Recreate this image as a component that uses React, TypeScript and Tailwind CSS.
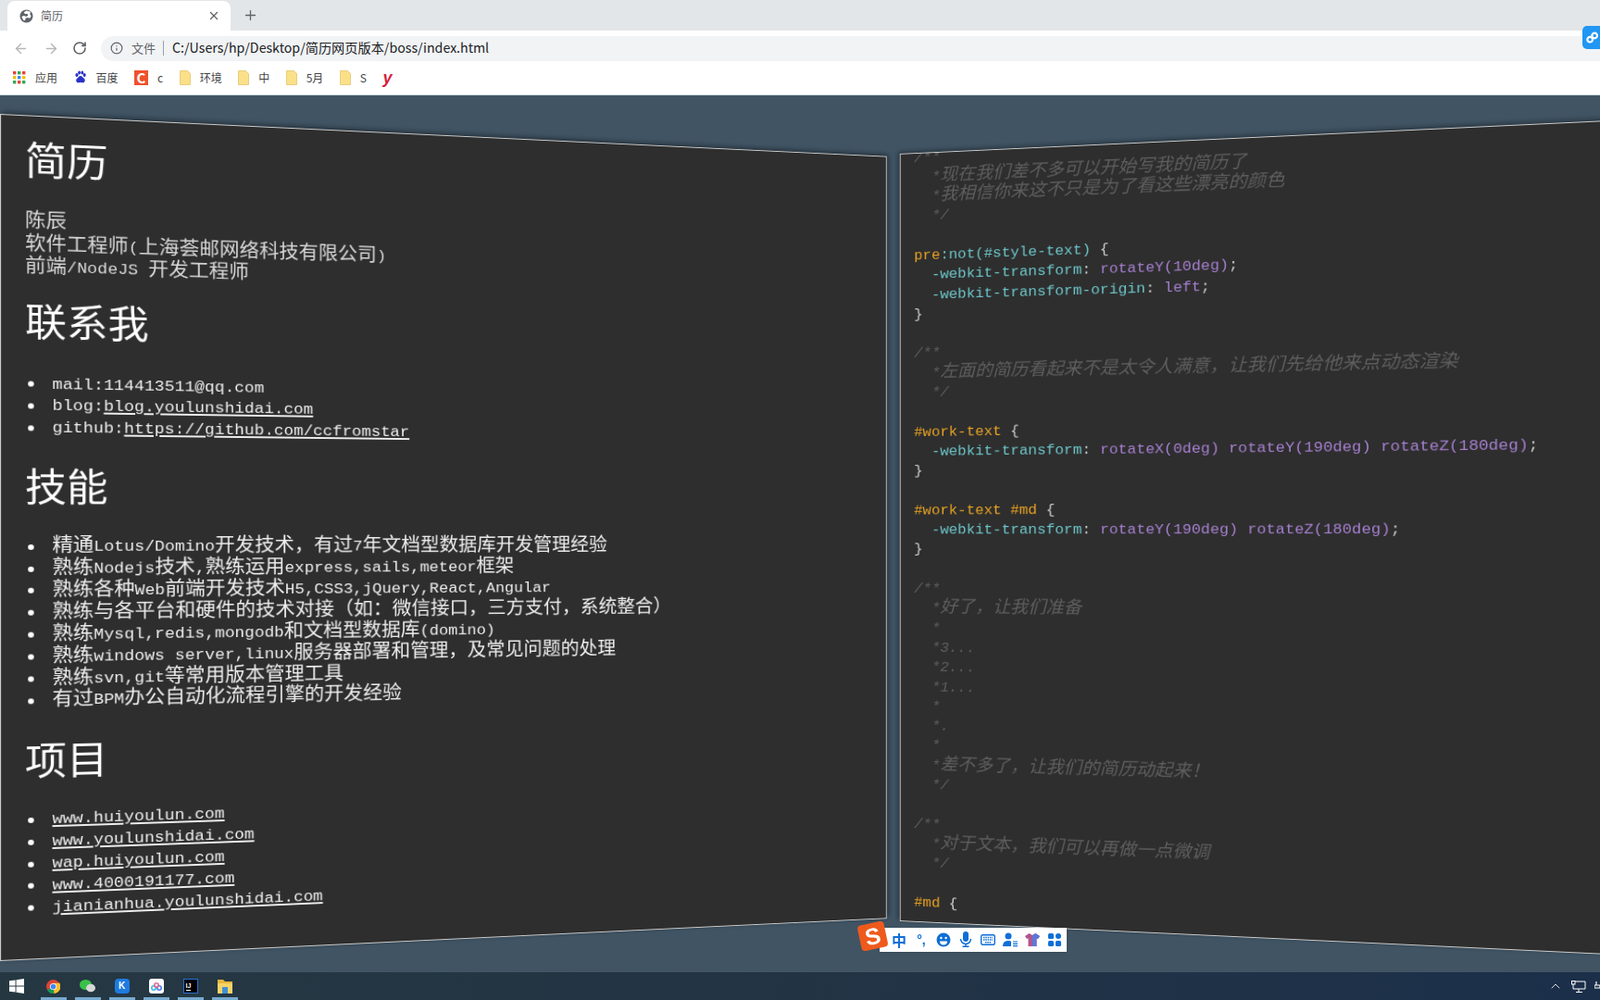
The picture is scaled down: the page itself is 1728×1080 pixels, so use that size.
import { ArrowLeft, ArrowRight, Info, Plus, RotateCw, X, ChevronUp } from "lucide-react";
import type { ReactNode } from "react";

const MONO = `"Liberation Mono", "Noto Sans CJK SC", monospace`;

// latin runs sit at a smaller size so they take half of a CJK cell, like NSimSun
function Mix({ text, latin = "text-[17.4px]" }: { text: string; latin?: string }) {
  const parts = text.split(/([\x20-\x7e]+)/).filter(Boolean);
  return (
    <>
      {parts.map((p, i) =>
        /^[\x20-\x7e]/.test(p) ? (
          <span key={i} className={latin}>
            {p}
          </span>
        ) : (
          <span key={i}>{p}</span>
        ),
      )}
    </>
  );
}

function Folder() {
  return (
    <svg width="12" height="16" viewBox="0 0 12 16" className="shrink-0">
      <path d="M.5 .5h8l3 3v12H.5z" fill="#fbe08a" stroke="#e2c56a" strokeWidth="0.8" />
    </svg>
  );
}

function Bookmark({ icon, label }: { icon: ReactNode; label?: string }) {
  return (
    <div className="flex items-center gap-[10px]">
      {icon}
      {label && <span className="text-[12px] text-[#444]">{label}</span>}
    </div>
  );
}

function BrowserChrome() {
  return (
    <div className="relative shrink-0 font-['Noto_Sans_CJK_SC','Noto_Sans',sans-serif]">
      {/* tab strip */}
      <div className="flex h-[33px] items-end bg-[#e3e6e9] pl-[8px]">
        <div className="flex h-[32px] w-[241px] items-center rounded-t-[8px] bg-white pl-[13px] pr-[11px]">
          <svg width="15" height="15" viewBox="0 0 16 16" className="shrink-0">
            <circle cx="8" cy="8" r="7.5" fill="#5f6368" />
            <path d="M8 1.500 5 3.500l1.500 2L9 5l1 2-2 1.500-3-1-2.500 1 2 4 2 .5.5-2.500 2.500-1 2.500 1 1.500-2.500-1.500-3L13 3z" fill="#fff" />
          </svg>
          <span className="ml-[8px] flex-1 text-[12px] text-[#5f6368]">简历</span>
          <X size={14} strokeWidth={2.2} className="text-[#5f6368]" />
        </div>
        <Plus size={17} strokeWidth={1.8} className="mb-[8px] ml-[13px] text-[#5f6368]" />
      </div>
      {/* address bar */}
      <div className="flex h-[35px] items-center bg-white pl-[14px] pt-[3px]">
        <ArrowLeft size={17} strokeWidth={2} className="text-[#b4b7ba]" />
        <ArrowRight size={17} strokeWidth={2} className="ml-[16px] text-[#b4b7ba]" />
        <RotateCw size={16} strokeWidth={2.4} className="ml-[14px] text-[#5f6368]" />
        <div className="ml-[15px] flex h-[27px] flex-1 items-center rounded-l-full bg-[#f1f3f4] pl-[10px]">
          <Info size={14} strokeWidth={2} className="text-[#5f6368]" />
          <span className="ml-[9px] text-[13px] text-[#5f6368]">文件</span>
          <span className="ml-[8px] h-[16px] w-px bg-[#9aa0a6]" />
          <span className="ml-[9px] text-[14.2px] text-[#202124]">C:/Users/hp/Desktop/简历网页版本/boss/index.html</span>
        </div>
      </div>
      {/* bookmarks */}
      <div className="flex h-[35px] items-center gap-[17.5px] border-b border-[#cfd8dc] bg-white pb-[3px] pl-[14px]">
        <Bookmark
          label="应用"
          icon={
            <svg width="14" height="14" viewBox="0 0 14 14">
              {[0, 5, 10].map((y, r) =>
                [0, 5, 10].map((x, c) => (
                  <rect key={`${r}${c}`} x={x} y={y} width="3.4" height="3.4" fill={["#ea4335", "#fbbc05", "#34a853", "#4285f4"][(r + c * 2) % 4]} />
                )),
              )}
            </svg>
          }
        />
        <Bookmark
          label="百度"
          icon={
            <svg width="14" height="15" viewBox="0 0 14 15" fill="#2932c8">
              <ellipse cx="3" cy="5" rx="1.6" ry="2" />
              <ellipse cx="5.6" cy="2.4" rx="1.4" ry="2" />
              <ellipse cx="8.8" cy="2.4" rx="1.4" ry="2" />
              <ellipse cx="11.2" cy="5" rx="1.5" ry="2" />
              <path d="M7 6c2 0 2.4 2 4 3 1.600 1.200.6 4.500-1.600 4.300-1.200 0-1.400-.4-2.400-.4s-1.400.4-2.400.4C2.400 13.500 1.400 10.200 3 9c1.600-1 2-3 4-3z" />
            </svg>
          }
        />
        <Bookmark
          label="c"
          icon={
            <span className="flex h-[16px] w-[15px] items-center justify-center bg-[#f0512c] text-[15px] font-bold leading-none text-white">C</span>
          }
        />
        <Bookmark icon={<Folder />} label="环境" />
        <Bookmark icon={<Folder />} label="中" />
        <Bookmark icon={<Folder />} label="5月" />
        <Bookmark icon={<Folder />} label="S" />
        <span className="font-['Liberation_Sans',sans-serif] text-[18px] font-bold italic leading-none text-[#d81e3a]">y</span>
      </div>
      {/* extension badge */}
      <div className="absolute right-0 top-[28px] flex h-[25px] w-[19px] items-center rounded-l-[5px] bg-[#2196f3] pl-[4px]">
        <svg width="18" height="16" viewBox="0 0 18 16" fill="none" stroke="#fff" strokeWidth="2.6">
          <circle cx="5" cy="10" r="3.4" />
          <circle cx="11" cy="5" r="3.4" />
        </svg>
      </div>
    </div>
  );
}

function Item({ children }: { children: ReactNode }) {
  return (
    <li className="flex h-[23.9px] items-center">
      <span className="ml-[3px] mr-[18.5px] h-[6px] w-[6px] shrink-0 rounded-full bg-white" />
      <span>{children}</span>
    </li>
  );
}

function ResumePanel() {
  const h1 = "m-0 text-[42px] leading-[50px] text-white";
  const ul = "m-0 list-none p-0 text-[#eee] leading-[23.9px]";
  const pLine = "block h-[24.5px]";
  return (
    <div
      className="h-[915px] w-[983px] shrink-0 origin-left rotate-y-[10deg] overflow-hidden border border-[#ccc] bg-[#2e2e2e] pl-[24px] pt-[27px] text-[21px] leading-[24.5px] text-[#d8d8d8] shadow-[2px_-2px_6px_rgba(0,0,0,0.45)]"
      style={{ fontFamily: MONO }}
    >
      <h1 className={h1}>简历</h1>
      <p className="mb-0 mt-[25px]">
        <span className={pLine}><Mix text="陈辰" /></span>
        <span className={pLine}><Mix text="软件工程师(上海荟邮网络科技有限公司)" /></span>
        <span className={pLine}><Mix text="前端/NodeJS 开发工程师" /></span>
      </p>
      <h2 className={`${h1} mt-[26.5px]`}>联系我</h2>
      <ul className={`${ul} mt-[26px]`}>
        <Item><Mix text="mail:114413511@qq.com" /></Item>
        <Item><Mix text="blog:" /><a className="underline"><Mix text="blog.youlunshidai.com" /></a></Item>
        <Item><Mix text="github:" /><a className="underline"><Mix text="https://github.com/ccfromstar" /></a></Item>
      </ul>
      <h2 className={`${h1} mt-[31px]`}>技能</h2>
      <ul className={`${ul} mt-[24px]`}>
        <Item><Mix text="精通Lotus/Domino开发技术，有过7年文档型数据库开发管理经验" /></Item>
        <Item><Mix text="熟练Nodejs技术,熟练运用express,sails,meteor框架" /></Item>
        <Item><Mix text="熟练各种Web前端开发技术H5,CSS3,jQuery,React,Angular" /></Item>
        <Item><Mix text="熟练与各平台和硬件的技术对接（如：微信接口，三方支付，系统整合）" /></Item>
        <Item><Mix text="熟练Mysql,redis,mongodb和文档型数据库(domino)" /></Item>
        <Item><Mix text="熟练windows server,linux服务器部署和管理，及常见问题的处理" /></Item>
        <Item><Mix text="熟练svn,git等常用版本管理工具" /></Item>
        <Item><Mix text="有过BPM办公自动化流程引擎的开发经验" /></Item>
      </ul>
      <h2 className={`${h1} mt-[32px]`}>项目</h2>
      <ul className={`${ul} mt-[23px]`}>
        {["www.huiyoulun.com", "www.youlunshidai.com", "wap.huiyoulun.com", "www.4000191177.com", "jianianhua.youlunshidai.com"].map((s) => (
          <Item key={s}><a className="underline"><Mix text={s} /></a></Item>
        ))}
      </ul>
    </div>
  );
}

type Seg = [string, string];

const CM = "italic text-[#5e5e5e]";
const SEL = "text-[#e5a023]";
const KEY = "text-[#6cc5c9]";
const VAL = "text-[#a67fd0]";
const PN = "text-[#ccc]";

const c = (t: string): Seg[] => [[t, CM]];

const CODE: Seg[][] = [
  c("/**"),
  c("  *现在我们差不多可以开始写我的简历了"),
  c("  *我相信你来这不只是为了看这些漂亮的颜色"),
  c("  */"),
  [],
  [["pre", SEL], [":not(#style-text)", KEY], [" {", PN]],
  [["  -webkit-transform", KEY], [": ", PN], ["rotateY(10deg)", VAL], [";", PN]],
  [["  -webkit-transform-origin", KEY], [": ", PN], ["left", VAL], [";", PN]],
  [["}", PN]],
  [],
  c("/**"),
  c("  *左面的简历看起来不是太令人满意，让我们先给他来点动态渲染"),
  c("  */"),
  [],
  [["#work-text", SEL], [" {", PN]],
  [["  -webkit-transform", KEY], [": ", PN], ["rotateX(0deg) rotateY(190deg) rotateZ(180deg)", VAL], [";", PN]],
  [["}", PN]],
  [],
  [["#work-text #md", SEL], [" {", PN]],
  [["  -webkit-transform", KEY], [": ", PN], ["rotateY(190deg) rotateZ(180deg)", VAL], [";", PN]],
  [["}", PN]],
  [],
  c("/**"),
  c("  *好了，让我们准备"),
  c("  *"),
  c("  *3..."),
  c("  *2..."),
  c("  *1..."),
  c("  *"),
  c("  *."),
  c("  *"),
  c("  *差不多了，让我们的简历动起来！"),
  c("  */"),
  [],
  c("/**"),
  c("  *对于文本，我们可以再做一点微调"),
  c("  */"),
  [],
  [["#md", SEL], [" {", PN]],
];

function CodePanel() {
  return (
    <div
      className="-ml-[14px] h-[915px] w-[917px] shrink-0 origin-right -rotate-y-[10deg] overflow-hidden border border-[#ccc] bg-[#2e2e2e] pl-[16px] text-[20.6px] leading-[23.3px] shadow-[-2px_-2px_6px_rgba(0,0,0,0.4)]"
      style={{ fontFamily: MONO }}
    >
      {/* scrolled down a little, the first line is cut by the edge */}
      <pre className="m-0 -mt-[7.5px] whitespace-pre" style={{ fontFamily: MONO }}>
        {CODE.map((line, i) => (
          <div key={i} className="h-[23.3px]">
            {line.map(([t, cls], j) => (
              <span key={j} className={cls}>
                <Mix text={t} latin="text-[17.2px]" />
              </span>
            ))}
          </div>
        ))}
      </pre>
    </div>
  );
}

function ImeCell({ children }: { children: ReactNode }) {
  return <div className="flex w-[24px] shrink-0 items-center justify-center">{children}</div>;
}

function ImeBar() {
  const blue = "#0f6fd6";
  return (
    <div className="absolute bottom-[52px] left-[950px] flex h-[26px] w-[202px] items-center bg-white pl-[9px] shadow-sm">
      <div className="absolute -left-[22px] -top-[5px] flex h-[28px] w-[29px] -rotate-12 items-center justify-center rounded-[4px] bg-[#ee5a1c] font-['Liberation_Sans',sans-serif] text-[25px] font-black leading-none text-white">
        S
      </div>
      <ImeCell>
        <span className="font-['Noto_Sans_CJK_SC',sans-serif] text-[16px] font-bold leading-none text-[#0f6fd6]">中</span>
      </ImeCell>
      <ImeCell>
        <span className="font-['Liberation_Sans',sans-serif] text-[14px] font-bold leading-none text-[#0f6fd6]">°,</span>
      </ImeCell>
      <ImeCell>
        <svg width="16" height="16" viewBox="0 0 16 16">
          <circle cx="8" cy="8" r="7.5" fill={blue} />
          <circle cx="5.400" cy="6" r="1.200" fill="#fff" />
          <circle cx="10.600" cy="6" r="1.200" fill="#fff" />
          <path d="M4 9.500h8a4 4 0 0 1-8 0z" fill="#fff" />
        </svg>
      </ImeCell>
      <ImeCell>
        <svg width="14" height="18" viewBox="0 0 14 18" fill={blue}>
          <rect x="4" y="0" width="6" height="11" rx="3" />
          <path d="M1.500 8a5.500 5.500 0 0 0 11 0" fill="none" stroke={blue} strokeWidth="1.500" />
          <rect x="6.300" y="13" width="1.400" height="3" />
          <rect x="3.500" y="15.500" width="7" height="1.500" />
        </svg>
      </ImeCell>
      <ImeCell>
        <svg width="16" height="12" viewBox="0 0 16 12">
          <rect x="0.700" y="0.700" width="14.600" height="10.600" rx="1.500" fill="none" stroke={blue} strokeWidth="1.400" />
          <path d="M3 3.500h10M3 6h10M5 8.700h6" stroke={blue} strokeWidth="1.400" strokeDasharray="1.500 .8" />
        </svg>
      </ImeCell>
      <ImeCell>
        <svg width="17" height="16" viewBox="0 0 17 16" fill={blue}>
          <circle cx="6" cy="4" r="3.500" />
          <path d="M0 15c0-4 2-6 6-6 1.500 0 2.500.3 3 .8V15z" />
          <path d="M11 10h5M11 12.300h5M11 14.600h5" stroke={blue} strokeWidth="1.200" />
        </svg>
      </ImeCell>
      <ImeCell>
        <svg width="16" height="16" viewBox="0 0 16 16">
          <path d="M4.500 1 8 3l3.500-2L16 4l-2 3-1.500-.7V15h-9V6.300L2 7 0 4z" fill="#b0558e" />
          <path d="M11.500 1 16 4l-2 3-1.500-.7V15H8V3z" fill="#5b78d8" />
        </svg>
      </ImeCell>
      <ImeCell>
        <svg width="14" height="14" viewBox="0 0 14 14" fill={blue}>
          <rect x="0" y="0" width="6" height="6" rx="1.500" />
          <rect x="8" y="0" width="6" height="6" rx="3" />
          <rect x="0" y="8" width="6" height="6" rx="1.500" />
          <rect x="8" y="8" width="6" height="6" rx="1.500" />
        </svg>
      </ImeCell>
    </div>
  );
}

function TaskIcon({ children }: { children: ReactNode }) {
  return (
    <div className="relative flex h-[30px] w-[37px] items-center justify-center">
      {children}
      <span className="absolute bottom-0 left-[4.5px] right-[4.5px] h-[3px] bg-[#78abcf]" />
    </div>
  );
}

function Taskbar() {
  return (
    <div className="flex h-[30px] shrink-0 items-center bg-gradient-to-r from-[#253842] via-[#223444] to-[#1b2f4a]">
      <div className="flex w-[39px] items-center pl-[10px]">
        <svg width="16" height="16" viewBox="0 0 17 17" fill="#fff">
          <path d="M0 2.500 7 1.500V8H0zM8 1.300 17 0v8H8zM0 9h7v6.500l-7-1zM8 9h9v8l-9-1.300z" />
        </svg>
      </div>
      <TaskIcon>
        <svg width="15" height="15" viewBox="0 0 16 16">
          <circle cx="8" cy="8" r="8" fill="#db4437" />
          <path d="M8 8 1 12a8 8 0 0 0 8 4z" fill="#0f9d58" />
          <path d="M8 4h7.400A8 8 0 0 1 9 16z" fill="#fbc02d" />
          <circle cx="8" cy="8" r="3.800" fill="#fff" />
          <circle cx="8" cy="8" r="3" fill="#4285f4" />
        </svg>
      </TaskIcon>
      <TaskIcon>
        <svg width="17" height="14" viewBox="0 0 17 14">
          <ellipse cx="6.500" cy="5.500" rx="6.500" ry="5.500" fill="#39c24a" />
          <ellipse cx="12" cy="9" rx="5" ry="4.300" fill="#d8d8d8" />
        </svg>
      </TaskIcon>
      <TaskIcon>
        <span className="flex h-[16px] w-[16px] items-center justify-center rounded-[4px] bg-[#1e7be0] font-['Liberation_Sans',sans-serif] text-[10px] font-bold leading-none text-white">K</span>
      </TaskIcon>
      <TaskIcon>
        <span className="flex h-[16px] w-[16px] items-center justify-center rounded-[3px] bg-white">
          <svg width="12" height="9" viewBox="0 0 12 9" fill="none" strokeWidth="1.600">
            <circle cx="3" cy="6" r="2.200" stroke="#3db8e8" />
            <circle cx="9" cy="6" r="2.200" stroke="#4c7ee8" />
            <circle cx="6" cy="3" r="2.200" stroke="#e06a8e" />
          </svg>
        </span>
      </TaskIcon>
      <TaskIcon>
        <span className="flex h-[16px] w-[16px] flex-col items-start justify-center border border-[#2b6fd0] bg-black pl-[2px] font-['Liberation_Sans',sans-serif] text-[7px] font-bold leading-[8px] text-white">
          IJ
          <span className="h-px w-[5px] bg-white" />
        </span>
      </TaskIcon>
      <TaskIcon>
        <svg width="16" height="15" viewBox="0 0 16 15">
          <path d="M0 0h6l2 2h8v4H0z" fill="#e8b63e" />
          <rect y="4" width="16" height="11" fill="#f6d365" />
          <rect x="5" y="8" width="6" height="7" fill="#3f8fd6" />
        </svg>
      </TaskIcon>
      <div className="flex-1" />
      <ChevronUp size={16} strokeWidth={1.5} className="mr-[9px] text-[#d5dde5]" />
      <svg width="16" height="15" viewBox="0 0 16 15" fill="none" stroke="#fff" strokeWidth="1" className="mr-[9px]">
        <rect x="0.500" y="1.500" width="3.500" height="3.500" />
        <path d="M4 2h11v8H2V5M8 10v3M5 13.500h7" />
      </svg>
      <svg width="6" height="15" viewBox="0 0 6 15" fill="none" stroke="#fff" strokeWidth="1.200">
        <path d="M2 2v4M0 6h6v3H0z" />
      </svg>
    </div>
  );
}

export default function App() {
  return (
    <div className="relative flex h-[1080px] w-[1728px] flex-col overflow-hidden bg-[#405464]">
      <BrowserChrome />
      <main className="flex flex-1 items-start overflow-hidden pt-[20px] perspective-[1536px] perspective-origin-[864px_477px]">
        <ResumePanel />
        <CodePanel />
      </main>
      <ImeBar />
      <Taskbar />
    </div>
  );
}
